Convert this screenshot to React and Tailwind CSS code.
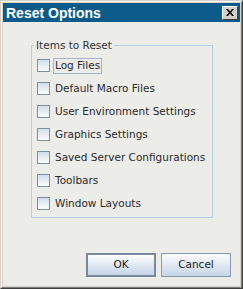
import React from 'react';

const items = [
    'Log Files',
    'Default Macro Files',
    'User Environment Settings',
    'Graphics Settings',
    'Saved Server Configurations',
    'Toolbars',
    'Window Layouts',
];

function CheckRow({ label, focused }) {
    return (
        <label className="flex items-center h-[23px] whitespace-nowrap">
            <span className="shrink-0 w-[13px] h-[13px] border border-[#7f8fa3] bg-linear-to-b from-[#d3dde9] to-[#fbfcfd]" />
            <span
                className={
                    'ml-[3px] px-[1px] h-[16px] flex items-center border ' +
                    (focused ? 'border-[#a3b3c4]' : 'border-transparent')
                }
            >
                {label}
            </span>
        </label>
    );
}

export default function App() {
    return (
        <div
            className="w-[243px] h-[289px] border border-t-[#d4d0c8] border-l-[#d4d0c8] border-r-[#404040] border-b-[#404040] text-[#2a2a2a]"
            style={{ fontFamily: '"DejaVu Sans", sans-serif' }}
        >
            <div className="h-full border border-t-white border-l-white border-r-[#808080] border-b-[#808080]">
                <div className="h-full flex flex-col border border-[#d4d0c8] bg-[#ecece9]">
                    {/* title bar */}
                    <div className="h-[19px] flex items-center justify-between bg-[#0c5b8b] pl-[3px] pr-[2px]">
                        <span
                            className="text-white font-bold text-[14px] leading-none"
                            style={{ fontFamily: '"Liberation Sans", Arial, sans-serif' }}
                        >
                            Reset Options
                        </span>
                        <span className="w-[16px] h-[14px] border border-t-white border-l-white border-r-[#404040] border-b-[#404040] bg-[#d4d0c8] flex items-center justify-center">
                            <svg width="8" height="7" viewBox="0 0 8 7">
                                <path d="M0 0h2l2 2.5L6 0h2L5 3.5 8 7H6L4 4.5 2 7H0l3-3.5z" fill="#000" />
                            </svg>
                        </span>
                    </div>

                    <div className="flex-1 flex flex-col">
                        <fieldset className="ml-[28px] mt-[17px] w-[182px] h-[179px] border border-[#b8cde4] pl-[5px] pt-[2px]">
                            <legend className="-ml-[3px] px-[2px] text-[10.5px] leading-[13px] text-[#333]">Items to Reset</legend>
                            <div className="flex flex-col text-[10.5px]">
                                {items.map((it, i) => (
                                    <CheckRow key={it} label={it} focused={i === 0} />
                                ))}
                            </div>
                        </fieldset>

                        <div className="mt-auto mb-[9px] mr-[9px] flex justify-end gap-[5px] text-[10.5px]">
                            <button className="w-[70px] h-[24px] border-2 border-[#7b8a9b] bg-linear-to-b from-[#fdfdfe] to-[#c4d5e7] text-[#222]">
                                OK
                            </button>
                            <button className="w-[70px] h-[24px] border border-[#8798ad] bg-linear-to-b from-[#fdfdfe] to-[#c4d5e7] text-[#222]">
                                Cancel
                            </button>
                        </div>
                    </div>
                </div>
            </div>
        </div>
    );
}
